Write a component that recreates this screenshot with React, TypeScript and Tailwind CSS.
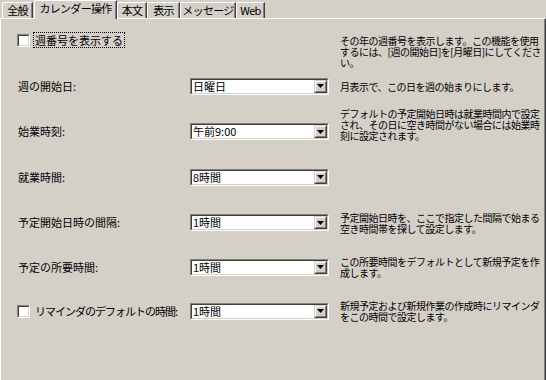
import React from "react";

const Combo = ({ value }: { value: string }) => (
  <div className="w-[139px] h-[17px] border border-t-[#808080] border-l-[#808080] border-b-white border-r-white shrink-0">
    <div className="w-full h-full border border-t-[#404040] border-l-[#404040] border-b-[#d4d0c8] border-r-[#d4d0c8] bg-white flex items-center">
      <div className="flex-1 pl-[1px] text-[11px] leading-[13px] text-black whitespace-nowrap">{value}</div>
      <div className="w-[13px] h-[13px] border border-t-[#d4d0c8] border-l-[#d4d0c8] border-b-[#404040] border-r-[#404040] shrink-0">
        <div className="w-full h-full bg-[#d4d0c8] border border-t-white border-l-white border-b-[#808080] border-r-[#808080] flex items-center justify-center">
          <svg width="7" height="4" viewBox="0 0 7 4">
            <polygon points="0,0 7,0 3.5,4" fill="#000" />
          </svg>
        </div>
      </div>
    </div>
  </div>
);

const Check = () => (
  <div className="w-[13px] h-[13px] border border-t-[#808080] border-l-[#808080] border-b-white border-r-white shrink-0">
    <div className="w-full h-full border border-t-[#404040] border-l-[#404040] border-b-[#d4d0c8] border-r-[#d4d0c8] bg-white" />
  </div>
);

const Tab = ({ label, w, selected }: { label: string; w: string; selected?: boolean }) => (
  <div
    className={
      (selected
        ? "h-[19px] -mb-[1px] relative z-10 ml-[1px] pb-[3px] "
        : "h-[16px] ") +
      w +
      " bg-[#d4d0c8] border-l border-t border-l-white border-t-white border-r border-r-[#404040] shadow-[inset_-1px_0_0_#808080] rounded-tl-[2px] flex items-center justify-center text-[11px] leading-[13px] tracking-[-0.7px] text-black whitespace-nowrap shrink-0"
    }
  >
    {label}
  </div>
);

const Desc = ({ lines, cls = "" }: { lines: string[]; cls?: string }) => (
  <div className={"ml-[11px] text-[10px] leading-[11px] tracking-[-0.5px] text-black whitespace-nowrap " + cls}>
    {lines.map((l, i) => (
      <div key={i}>{l}</div>
    ))}
  </div>
);

export default function App() {
  return (
    <div className="w-[546px] h-[380px] bg-[#d4d0c8] font-['Noto_Sans_CJK_JP',sans-serif] overflow-hidden flex flex-col">
      <div className="h-[18px] flex items-end pl-[2px] shrink-0">
        <Tab label="全般" w="w-[31px]" />
        <Tab label="カレンダー操作" w="w-[83px]" selected />
        <Tab label="本文" w="w-[30px]" />
        <Tab label="表示" w="w-[33px]" />
        <Tab label="メッセージ" w="w-[56px]" />
        <Tab label="Web" w="w-[29px]" />
      </div>
      <div className="flex-1 border-t border-l border-t-white border-l-white border-r border-r-[#404040] shadow-[inset_-1px_0_0_#808080] flex flex-col text-[11px] text-black">
        {/* Row 1 */}
        <div className="h-[44px] flex items-center shrink-0">
          <div className="w-[189px] flex items-center pl-[16px] shrink-0 self-center -mt-[2px]">
            <Check />
            <div className="ml-[3px] border border-dotted border-black px-[1px] h-[16px] flex items-center leading-[13px] whitespace-nowrap">
              週番号を表示する
            </div>
          </div>
          <div className="w-[139px] shrink-0" />
          <Desc
            cls="self-start mt-[16px]"
            lines={[
              "その年の週番号を表示します。この機能を使用",
              "するには、[週の開始日]を[月曜日]にしてくださ",
              "い。",
            ]}
          />
        </div>
        {/* Row 2 */}
        <div className="h-[46px] flex items-center shrink-0">
          <div className="w-[189px] pl-[17px] shrink-0 whitespace-nowrap">週の開始日:</div>
          <Combo value="日曜日" />
          <Desc lines={["月表示で、この日を週の始まりにします。"]} />
        </div>
        {/* Row 3 */}
        <div className="h-[45px] flex items-center shrink-0">
          <div className="w-[189px] pl-[17px] shrink-0 whitespace-nowrap">始業時刻:</div>
          <Combo value="午前9:00" />
          <Desc
            cls="self-start -mt-[1px]"
            lines={[
              "デフォルトの予定開始日時は就業時間内で設定",
              "され、その日に空き時間がない場合には始業時",
              "刻に設定されます。",
            ]}
          />
        </div>
        {/* Row 4 */}
        <div className="h-[46px] flex items-center shrink-0">
          <div className="w-[189px] pl-[17px] shrink-0 whitespace-nowrap">就業時間:</div>
          <Combo value="8時間" />
        </div>
        {/* Row 5 */}
        <div className="h-[45px] flex items-center shrink-0">
          <div className="w-[189px] pl-[17px] shrink-0 whitespace-nowrap">予定開始日時の間隔:</div>
          <Combo value="1時間" />
          <Desc
            lines={[
              "予定開始日時を、ここで指定した間隔で始まる",
              "空き時間帯を探して設定します。",
            ]}
          />
        </div>
        {/* Row 6 */}
        <div className="h-[44px] flex items-center shrink-0">
          <div className="w-[189px] pl-[17px] shrink-0 whitespace-nowrap">予定の所要時間:</div>
          <Combo value="1時間" />
          <Desc
            lines={[
              "この所要時間をデフォルトとして新規予定を作",
              "成します。",
            ]}
          />
        </div>
        {/* Row 7 */}
        <div className="h-[44px] flex items-center shrink-0">
          <div className="w-[189px] pl-[16px] shrink-0 flex items-center whitespace-nowrap">
            <Check />
            <span className="ml-[5px] tracking-[-1px]">リマインダのデフォルトの時間:</span>
          </div>
          <Combo value="1時間" />
          <Desc
            lines={[
              "新規予定および新規作業の作成時にリマインダ",
              "をこの時間で設定します。",
            ]}
          />
        </div>
      </div>
    </div>
  );
}
